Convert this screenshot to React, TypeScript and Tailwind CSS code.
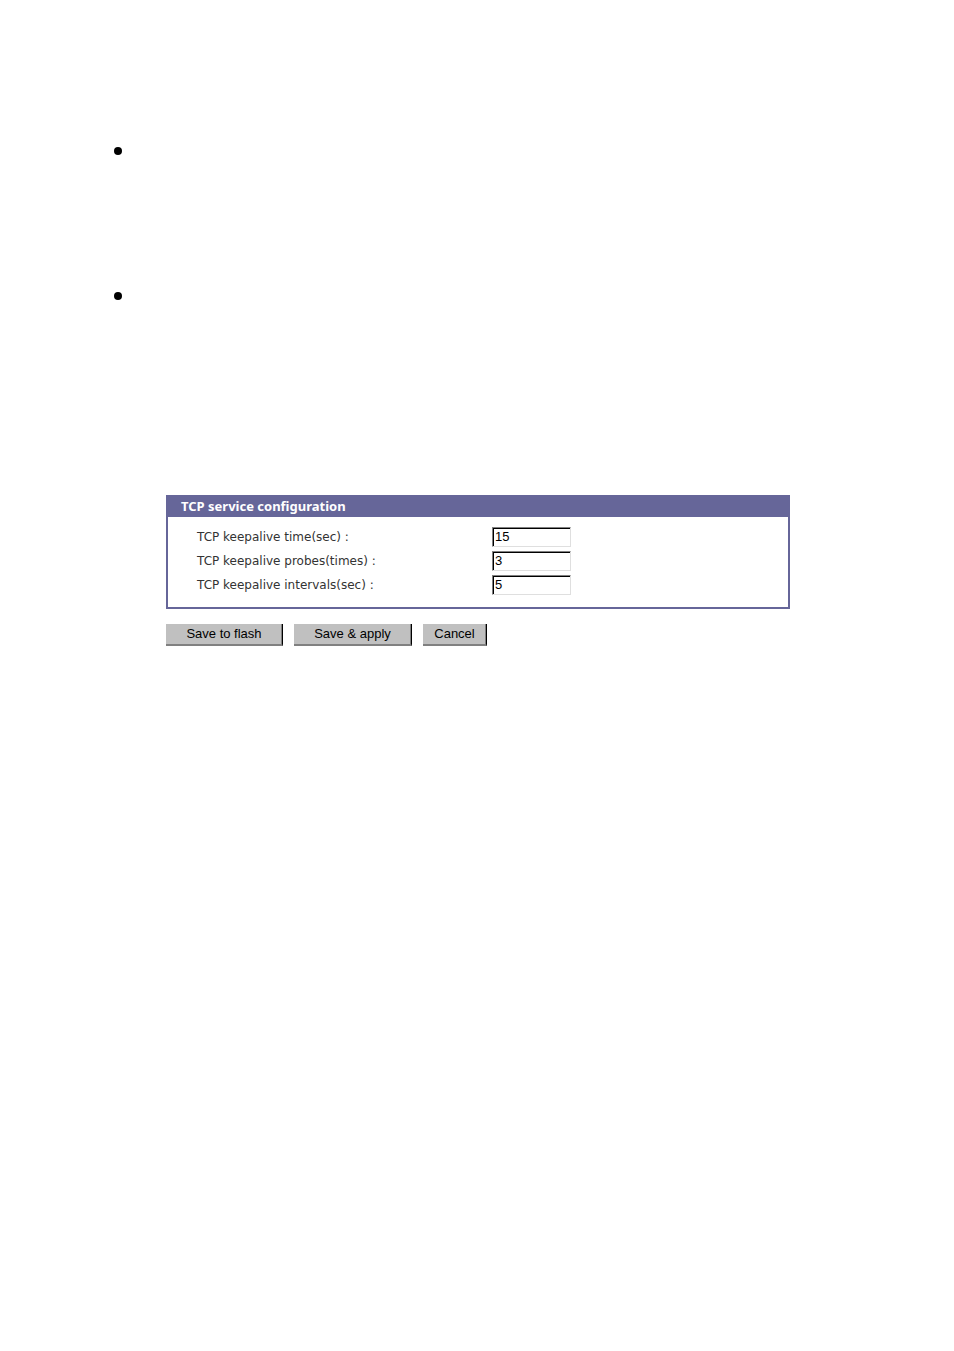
import { useState } from 'react'

interface Field {
  id: string
  label: string
  value: string
}

const FIELDS: Field[] = [
  { id: 'keepalive-time', label: 'TCP keepalive time(sec) :', value: '15' },
  { id: 'keepalive-probes', label: 'TCP keepalive probes(times) :', value: '3' },
  { id: 'keepalive-intervals', label: 'TCP keepalive intervals(sec) :', value: '5' },
]

const ACTIONS = [
  { label: 'Save to flash', width: 'w-[117px]' },
  { label: 'Save & apply', width: 'w-[118px]' },
  { label: 'Cancel', width: 'w-16' },
]

function FieldRow({ field }: { field: Field }) {
  const [value, setValue] = useState(field.value)

  return (
    <div className="flex h-5 items-center">
      <label
        htmlFor={field.id}
        className="w-[295px] shrink-0 font-['DejaVu_Sans',sans-serif] text-[12px] leading-5 text-[#333333]"
      >
        {field.label}
      </label>
      <input
        id={field.id}
        type="text"
        value={value}
        onChange={(e) => setValue(e.target.value)}
        className="h-5 w-[79px] border border-t-[#808080] border-r-[#dfdfdf] border-b-[#dfdfdf] border-l-[#808080] bg-white px-[2px] pb-[2px] font-['Liberation_Sans',sans-serif] text-[13px] leading-4 text-black shadow-[inset_1px_1px_0_#000000] outline-none"
      />
    </div>
  )
}

export default function App() {
  return (
    <main className="min-h-screen bg-white pt-[147px] pr-[164px] pb-10 pl-[114px]">
      <ul className="h-[348px]">
        <li className="h-[145px]">
          <span className="block size-2 rounded-full bg-black" />
        </li>
        <li>
          <span className="block size-2 rounded-full bg-black" />
        </li>
      </ul>

      <form className="ml-[52px]" onSubmit={(e) => e.preventDefault()}>
        <section className="border-2 border-[#666699] bg-white">
          <h2 className="bg-[#666699] pb-[2px] pl-[13px] font-['Noto_Sans',sans-serif] text-[13px] leading-[18px] font-bold text-white">
            TCP service configuration
          </h2>
          <div className="flex flex-col gap-1 pt-[10px] pb-3 pl-[29px]">
            {FIELDS.map((field) => (
              <FieldRow key={field.id} field={field} />
            ))}
          </div>
        </section>

        <div className="mt-[15px] flex gap-[11px]">
          {ACTIONS.map((action) => (
            <button
              key={action.label}
              type="button"
              className={`${action.width} h-[22px] border-r border-b-2 border-r-black border-b-[#808080] bg-[#c0c0c0] font-['Liberation_Sans',sans-serif] text-[13px] leading-4 text-black shadow-[inset_-1px_0_0_#808080]`}
            >
              {action.label}
            </button>
          ))}
        </div>
      </form>
    </main>
  )
}
